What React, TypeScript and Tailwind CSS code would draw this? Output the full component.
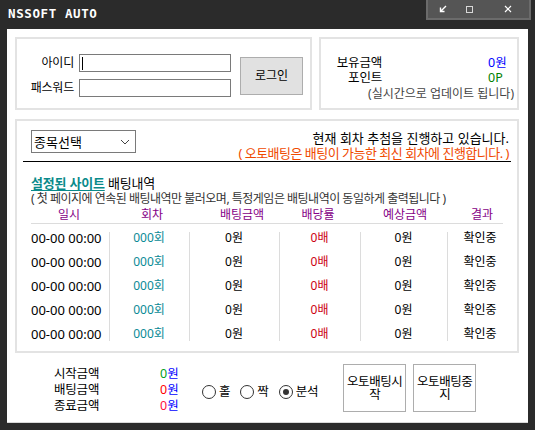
import React from 'react'

// ─── Table data ───────────────────────────────────────────────────────────
const COLS = [
  { text: '00-00 00:00', cls: 'text-left text-black text-[13px]', sep: false },
  { text: '000회', cls: 'text-center text-[#0a8a96] text-[12px]', sep: true },
  { text: '0원', cls: 'text-center text-black text-[12px]', sep: true },
  { text: '0배', cls: 'text-center text-[#cc0010] text-[12px]', sep: true },
  { text: '0원', cls: 'text-center text-black text-[12px]', sep: true },
  { text: '확인중', cls: 'text-center text-black text-[12px]', sep: true },
]
const COL_W = ['w-[78px]', 'w-[80px]', 'w-[90px]', 'w-[81px]', 'w-[87px]', 'w-[66px]']
const HEADERS = ['일시', '회차', '배팅금액', '배당률', '예상금액', '결과']

function Radio({ label, checked }: { label: string; checked?: boolean }) {
  return (
    <div className="flex items-center">
      <span className="w-[14px] h-[14px] rounded-full border border-[#333] bg-white flex items-center justify-center">
        {checked && <span className="w-[6px] h-[6px] rounded-full bg-[#333]" />}
      </span>
      <span className="ml-[3px] text-[12.5px] leading-[14px] tracking-[-0.2px] text-black">{label}</span>
    </div>
  )
}

export default function App() {
  return (
    <div className="w-[535px] h-[430px] bg-[#2b2b2b] flex flex-col [font-family:'Noto_Sans','Noto_Sans_CJK_KR',sans-serif]">
      {/* ── Title bar ── */}
      <div className="h-[29px] flex justify-between pl-[8px] pr-[4px]">
        <span className="mt-[7px] text-white font-bold text-[12.5px] leading-[14px] tracking-[0.6px] [font-family:'DejaVu_Sans_Mono',monospace]">
          NSSOFT AUTO
        </span>
        <div className="w-[105px] h-[20px] bg-[#555555] border-x-2 border-b-2 border-[#6b6b6b] flex items-center pl-[11px]">
          <svg width="8" height="8" viewBox="0 0 8 8" className="shrink-0">
            <path d="M7 1 L1.5 6.5 M1.5 2.5 V6.5 H5.5" stroke="#fff" strokeWidth="1.4" fill="none" />
          </svg>
          <svg width="7" height="7" viewBox="0 0 7 7" className="ml-[19px] shrink-0">
            <rect x="0.5" y="0.5" width="6" height="6" stroke="#d8d8d8" strokeWidth="1" fill="none" />
          </svg>
          <svg width="8" height="8" viewBox="0 0 8 8" className="ml-[31px] shrink-0">
            <path d="M1 1 L7 7 M7 1 L1 7" stroke="#fff" strokeWidth="1.2" fill="none" />
          </svg>
        </div>
      </div>

      {/* ── Client area ── */}
      <div className="mx-[7px] h-[394px] bg-white border-b border-[#d9d9d9] flex flex-col">
        {/* Top panels */}
        <div className="flex gap-[7px] pt-[8px] pl-[8px]">
          {/* Login */}
          <div className="w-[297px] h-[73px] border-2 border-[#e3e3e3] flex items-center pl-[6px] pt-[4px]">
            <div className="flex flex-col gap-[7px]">
              <div className="flex items-center">
                <span className="w-[51px] text-right text-[12px] leading-[14px] tracking-[-0.2px] text-black">아이디</span>
                <div className="ml-[5px] w-[152px] h-[18px] border border-[#7a7a7a] bg-white flex items-center pl-[2px]">
                  <span className="w-px h-[13px] bg-black" />
                </div>
              </div>
              <div className="flex items-center">
                <span className="w-[51px] text-right text-[12px] leading-[14px] tracking-[-0.2px] text-black">패스워드</span>
                <div className="ml-[5px] w-[152px] h-[18px] border border-[#7a7a7a] bg-white" />
              </div>
            </div>
            <div className="ml-[9px] w-[63px] h-[38px] bg-[#e1e1e1] border border-[#adadad] flex items-center justify-center text-[12px] leading-[14px] text-black">
              로그인
            </div>
          </div>

          {/* Balance */}
          <div className="w-[200px] h-[73px] border-2 border-[#e3e3e3] flex flex-col pt-[16px]">
            <div className="flex items-center h-[15px]">
              <span className="w-[61px] text-right text-[12.5px] leading-[15px] tracking-[-0.2px] text-black">보유금액</span>
              <span className="ml-[106px] text-[12.5px] leading-[15px] text-[#0000ff]">0원</span>
            </div>
            <div className="flex items-center h-[15px]">
              <span className="w-[61px] text-right text-[12.5px] leading-[15px] tracking-[-0.2px] text-black">포인트</span>
              <span className="ml-[106px] text-[12.5px] leading-[15px] text-[#008000]">0P</span>
            </div>
            <div className="mt-[2px] pr-[3px] text-right text-[12px] leading-[14px] text-[#444]">
              (실시간으로 업데이트 됩니다)
            </div>
          </div>
        </div>

        {/* Main panel */}
        <div className="mt-[9px] ml-[8px] w-[504px] h-[234px] border-2 border-[#e3e3e3] flex flex-col pt-[9px]">
          <div className="flex justify-between items-start pl-[14px] pr-[8px] h-[30px]">
            <div className="w-[105px] h-[23px] border border-[#7a7a7a] bg-white flex items-center justify-between pl-[2px] pr-[5px]">
              <span className="text-[13px] leading-[14px] text-black">종목선택</span>
              <svg width="10" height="6" viewBox="0 0 10 6">
                <path d="M1 1 L5 5 L9 1" stroke="#444" strokeWidth="1" fill="none" />
              </svg>
            </div>
            <div className="flex flex-col items-end pt-[1px]">
              <span className="text-[13px] leading-[15px] text-black">현재 회차 추첨을 진행하고 있습니다.</span>
              <span className="text-[13px] leading-[15px] tracking-[-0.5px] text-[#f04a00]">( 오토배팅은 배팅이 가능한 최신 회차에 진행합니다. )</span>
            </div>
          </div>
          <div className="mt-[1px] mx-[6px] h-px bg-black" />

          <div className="mt-[14px] pl-[14px] text-[13px] leading-[15px] tracking-[-0.2px]">
            <span className="font-bold underline underline-offset-2 text-[#0a8a8a]">설정된 사이트</span>
            <span className="text-black"> 배팅내역</span>
          </div>
          <div className="pl-[14px] text-[12px] leading-[16px] tracking-[-0.5px] text-[#333]">
            ( 첫 페이지에 연속된 배팅내역만 불러오며, 특정게임은 배팅내역이 동일하게 출력됩니다 )
          </div>

          {/* Table header */}
          <div className="ml-[14px] w-[472px] h-[17px] grid grid-cols-[76px_90px_90px_62px_112px_42px] border-b border-[#dcdcdc] text-[12px] leading-[16px] text-[#860086]">
            {HEADERS.map(h => (
              <span key={h} className="text-center">{h}</span>
            ))}
          </div>

          {/* Table body */}
          <div className="mt-[2px] ml-[14px] flex">
            {COLS.map((c, i) => (
              <div
                key={i}
                className={`${COL_W[i]} relative flex flex-col ${c.sep ? "before:absolute before:left-0 before:top-[6px] before:bottom-[5px] before:w-px before:bg-[#dcdcdc] before:content-['']" : ''}`}
              >
                {[0, 1, 2, 3, 4].map(r => (
                  <div key={r} className={`h-[24px] flex items-center ${c.sep ? 'justify-center' : ''}`}>
                    <span className={`${c.cls} leading-[14px]`}>{c.text}</span>
                  </div>
                ))}
              </div>
            ))}
          </div>
        </div>

        {/* Bottom controls */}
        <div className="flex-1 flex items-center pl-[47px]">
          <div className="mt-[4px] flex flex-col w-[106px] text-[12.5px] leading-[16px] tracking-[-0.2px] text-black">
            <span>시작금액</span>
            <span>배팅금액</span>
            <span>종료금액</span>
          </div>
          <div className="mt-[4px] flex flex-col w-[42px] text-[12.5px] leading-[16px]">
            <span><span className="text-[#00a020]">0</span><span className="text-[#0000ff]">원</span></span>
            <span><span className="text-[#ff0000]">0</span><span className="text-[#0000ff]">원</span></span>
            <span><span className="text-[#ff1040]">0</span><span className="text-[#0000ff]">원</span></span>
          </div>
          <div className="mt-[8px] flex items-center gap-[10px]">
            <Radio label="홀" />
            <Radio label="짝" />
            <Radio label="분석" checked />
          </div>
          <button className="ml-[25px] w-[63px] h-[48px] bg-white border border-[#adadad] px-[2px] text-[12.5px] leading-[13px] tracking-[-0.4px] text-black">
            오토배팅시작
          </button>
          <button className="ml-[7px] w-[63px] h-[48px] bg-white border border-[#adadad] px-[2px] text-[12.5px] leading-[13px] tracking-[-0.4px] text-black">
            오토배팅중지
          </button>
        </div>
      </div>
    </div>
  )
}
